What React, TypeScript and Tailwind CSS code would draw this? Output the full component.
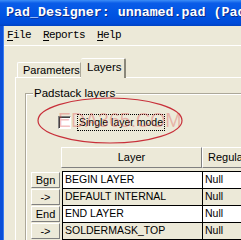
import React from 'react'

const rows = [
	{ btn: 'Bgn', layer: 'BEGIN LAYER', pad: 'Null', white: true },
	{ btn: '->', layer: 'DEFAULT INTERNAL', pad: 'Null', white: false },
	{ btn: 'End', layer: 'END LAYER', pad: 'Null', white: true },
	{ btn: '->', layer: 'SOLDERMASK_TOP', pad: 'Null', white: false },
]

const Logo = () => (
	<svg width="16" height="16" viewBox="0 0 16 16">
		<path d="M4 4 L14 3 L5 13 L15 12" fill="none" stroke="#5a5a5a" strokeWidth="3" />
		<path d="M3 3 L13 2 L4 12 L14 11" fill="none" stroke="#e01818" strokeWidth="2.6" />
		<path d="M2 7 L9 7" stroke="#e01818" strokeWidth="1.6" />
	</svg>
)

const MenuItem = ({ first, rest }: { first: string; rest: string }) => (
	<span>
		<span className="underline underline-offset-2">{first}</span>
		{rest}
	</span>
)

export default function App() {
	return (
		<div className="relative w-[241px] h-[240px] overflow-hidden bg-[#ece9d8] flex flex-col font-['Liberation_Sans',Arial,sans-serif] text-black">
			{/* title bar */}
			<div className="h-[26px] shrink-0 flex items-center pl-[4px] gap-[2px] bg-[linear-gradient(180deg,#3d8ef7_0%,#0a5ce8_12%,#0054e3_55%,#004bd9_90%,#0142c2_100%)]">
				<Logo />
				<span className="text-[13.3px] font-bold whitespace-nowrap text-white font-['Liberation_Mono',monospace] [text-shadow:1px_1px_0_#0a2a8a]">
					Pad_Designer: unnamed.pad (Pad
				</span>
			</div>

			<div className="flex flex-1">
				{/* window frame */}
				<div className="w-[4px] shrink-0 bg-[#0b4fd8] border-r border-[#3a7cf0]" />

				<div className="flex-1 flex flex-col">
					{/* menu */}
					<div className="h-[20px] shrink-0 border-b border-white flex items-center pl-[3px] gap-[12px] text-[11px] tracking-[-0.6px] font-['Liberation_Mono',monospace]">
						<MenuItem first="F" rest="ile" />
						<MenuItem first="R" rest="eports" />
						<MenuItem first="H" rest="elp" />
					</div>

					<div className="flex-1 flex flex-col pl-[11px] pt-[12px]">
						{/* tabs */}
						<div className="flex items-end h-[19px] text-[11px]">
							<div className="ml-[2px] w-[64px] h-[15px] border-t border-l border-white border-r border-r-[#aca899] rounded-tl-[2px] flex items-center pl-[5px]">
								Parameters
							</div>
							<div className="relative z-10 -mb-[1px] w-[45px] h-[20px] bg-[#ece9d8] border-t border-white border-r-2 border-r-[#8a877a] rounded-t-[2px] flex items-center pl-[6px] pb-[2px] text-[11.5px]">
								Layers
							</div>
						</div>

						{/* tab page */}
						<div className="flex-1 border-t border-l border-white pl-[9px] pt-[15px]">
							<div className="relative h-full border-t border-l border-[#aca899] shadow-[inset_1px_1px_0_#ffffff] pt-[20px] pl-[5px] text-[11px]">
								<span className="absolute -top-[8px] left-[7px] px-[1px] bg-[#ece9d8] leading-[14px] text-[11.5px]">
									Padstack layers
								</span>

								<div className="flex items-center h-[17px] pl-[27px]">
									<div className="w-[13px] h-[13px] bg-white border border-t-[#808080] border-l-[#808080] border-b-[#ffffff] border-r-[#ffffff] shadow-[inset_1px_1px_0_#404040]" />
									<span className="ml-[6px] h-[17px] border border-dotted border-black px-[1px] text-[10.5px] leading-[15px]">
										Single layer mode
									</span>
								</div>

								{/* grid header */}
								<div className="flex mt-[16px] h-[21px] whitespace-nowrap">
									<div className="w-[30px] shrink-0" />
									<div className="w-[141px] shrink-0 flex items-center justify-center border border-t-white border-l-white border-b-[#808080] border-r-[#808080]">
										Layer
									</div>
									<div className="w-[80px] shrink-0 flex items-center pl-[5px] border border-t-white border-l-white border-b-[#808080] border-r-[#808080]">
										Regular Pad
									</div>
								</div>

								{/* grid rows */}
								<div className="mt-[3px] ml-[31px] h-[1px] bg-black" />
								{rows.map((row, index) => (
									<div key={index} className="flex h-[17px] whitespace-nowrap text-[10.5px]">
										<div className="w-[29px] shrink-0 h-[16px] flex items-center justify-center border border-t-white border-l-white border-b-[#808080] border-r-[#808080] text-[11px]">
											{row.btn}
										</div>
										<div className="w-[2px] shrink-0" />
										<div className={`flex border-l border-black ${row.white ? 'bg-white' : 'bg-[#ece9d8]'}`}>
											<div className="w-[140px] border-r border-b border-black flex items-center pl-[2px]">
												{row.layer}
											</div>
											<div className="w-[80px] border-r border-b border-black flex items-center pl-[2px]">
												{row.pad}
											</div>
										</div>
									</div>
								))}
							</div>
						</div>
					</div>
				</div>
			</div>

			{/* watermark + annotation overlay */}
			<span className="pointer-events-none absolute left-[58px] top-[109px] text-[19.5px] leading-[22px] text-[#e04848]/35 whitespace-nowrap">
				EDA365.COM
			</span>
			<svg className="pointer-events-none absolute left-0 top-0" width="241" height="240">
				<ellipse cx="110" cy="120.5" rx="72" ry="22.5" fill="none" stroke="#c8303a" strokeWidth="1.2" />
			</svg>
		</div>
	)
}
